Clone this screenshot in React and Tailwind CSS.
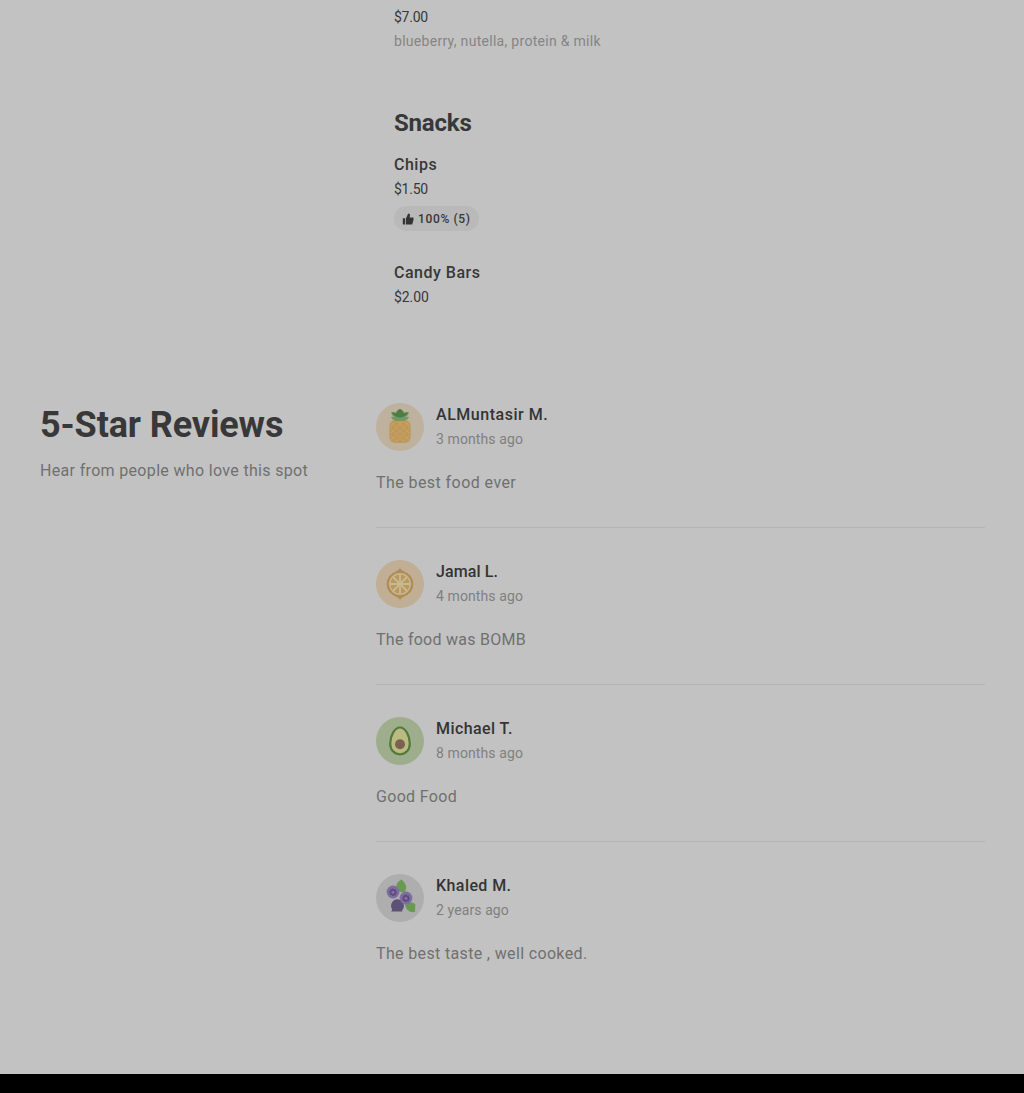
const PineappleAvatar = () => (
  <svg className="w-12 h-12 shrink-0" viewBox="0 0 48 48">
    <circle cx="24" cy="24" r="24" fill="#beb19e" />
    <rect x="13.3" y="17" width="21.4" height="23" rx="6" fill="#bf9857" />
    <g stroke="#c3a36b" strokeWidth="1" fill="none">
      <path d="M14 24l6-6M14 31l13-13M14 38l20-20M20 39l14-14M27 39l7-7" />
      <path d="M34 24l-6-6M34 31L21 18M34 38L14 18M28 39L14 25M21 39l-7-7" />
    </g>
    <path d="M24 17.500c-3.500 1.500-7.500 0-9-3.500 1.800-.6 3-.3 4 .3-2.600-1.200-3.800-3-3.800-5.200 1.800-.3 3.200.1 4.200 1C20.300 8 22 6.800 24 6c2 .8 3.700 2 4.600 4.100 1-.9 2.400-1.300 4.200-1 0 2.200-1.200 4-3.800 5.200 1-.6 2.200-.9 4-.3-1.500 3.500-5.500 5-9 3.500z" fill="#719a61" />
    <path d="M24 14.500c-3.800-.2-7-1.900-8-4.900 2-.3 3.300 0 4.300.9.3-2 1.500-3.500 3.700-4.500 2.200 1 3.400 2.500 3.700 4.500 1-.9 2.300-1.200 4.300-.9-1 3-4.200 4.700-8 4.900z" fill="#4f7b47" />
  </svg>
);

const OrangeAvatar = () => (
  <svg className="w-12 h-12 shrink-0" viewBox="0 0 48 48">
    <circle cx="24" cy="24" r="24" fill="#c0ae95" />
    <path d="M24 8.500l4 3a13 13 0 010 25L24 39.500l-4-3a13 13 0 010-25z" fill="#b18c54" />
    <circle cx="24" cy="24" r="11" fill="#c6b692" />
    <circle cx="24" cy="24" r="9.600" fill="#ba985f" />
    <g stroke="#c9b991" strokeWidth="1.800">
      <path d="M24 14v20M14 24h20M17 17l14 14M31 17L17 31" />
    </g>
  </svg>
);

const AvocadoAvatar = () => (
  <svg className="w-12 h-12 shrink-0" viewBox="0 0 48 48">
    <circle cx="24" cy="24" r="24" fill="#9eae8c" />
    <path d="M24 10.500c-5.500 0-9.800 8.300-9.800 16.200 0 6.300 4.200 10.600 9.800 10.600s9.800-4.300 9.800-10.600c0-7.900-4.300-16.200-9.800-16.200z" fill="#bcba83" stroke="#507b3a" strokeWidth="2.200" />
    <circle cx="24" cy="27.300" r="5" fill="#7a6150" />
  </svg>
);

const BlueberryAvatar = () => (
  <svg className="w-12 h-12 shrink-0" viewBox="0 0 48 48">
    <circle cx="24" cy="24" r="24" fill="#aeaeae" />
    <path d="M21 15c-2-4 .8-7.500 4.500-9.500 4.300 4 6.300 8.500 3 12.500-3 .6-6-.2-7.500-3z" fill="#6a9951" />
    <path d="M29 30c3.500-2.800 8-2 10.300.5L39 38c-5 .8-9.500-1.800-10-8z" fill="#6a9951" />
    <circle cx="17" cy="18" r="6.400" fill="#7f6da2" />
    <path d="M17 14.300l1.200 1.200 1.800 0v1.800l1.200 1.200-1.300 1.200-.2 1.700-1.700-.1-1.300 1-1.100-1.200-1.700-.2.100-1.700-.9-1.300 1.200-1.100.1-1.600 1.700.1z" fill="#5b4a7d" />
    <circle cx="17" cy="18.300" r="1.600" fill="#8273a3" />
    <path d="M21.600 25.200a6.500 6.500 0 016.400 6.500c0 1.800-.8 3.600-2 4.700l.5 1.100H15.300l.9-2.200a6.500 6.500 0 015.400-10.100z" fill="#5d5276" />
    <circle cx="30" cy="24" r="6.400" fill="#7f6da2" />
    <path d="M30 20.300l1.200 1.200 1.800 0v1.800l1.200 1.200-1.300 1.200-.2 1.700-1.700-.1-1.300 1-1.100-1.200-1.700-.2.100-1.700-.9-1.300 1.200-1.100.1-1.600 1.700.1z" fill="#5b4a7d" />
    <circle cx="30" cy="24.300" r="1.600" fill="#8273a3" />
  </svg>
);

const reviews = [
  { name: "ALMuntasir M.", nameSpacing: "tracking-[0.52px]", date: "3 months ago", text: "The best food ever", textSpacing: "tracking-[0.43px]", Avatar: PineappleAvatar },
  { name: "Jamal L.", nameSpacing: "tracking-[0.1px]", date: "4 months ago", text: "The food was BOMB", textSpacing: "tracking-[0.27px]", Avatar: OrangeAvatar },
  { name: "Michael T.", nameSpacing: "tracking-[0.42px]", date: "8 months ago", text: "Good Food", textSpacing: "tracking-[0.32px]", Avatar: AvocadoAvatar },
  { name: "Khaled M.", nameSpacing: "tracking-[0.42px]", date: "2 years ago", text: "The best taste , well cooked.", textSpacing: "tracking-[0.35px]", Avatar: BlueberryAvatar },
];

function Review({ review, last }) {
  const { name, nameSpacing, date, text, textSpacing, Avatar } = review;
  return (
    <article className={last ? "h-[125px]" : "h-[125px] mb-8 border-b border-[#b4b4b4]"}>
      <div className="flex gap-3">
        <Avatar />
        <div>
          <h3 className={`w-fit text-base leading-6 font-medium text-[#343434] ${nameSpacing}`}>{name}</h3>
          <p className="w-fit mt-0.5 text-sm leading-5 text-[#808080] tracking-[0.1px]">{date}</p>
        </div>
      </div>
      <p className={`w-fit mt-5 text-base leading-6 text-[#707070] ${textSpacing}`}>{text}</p>
    </article>
  );
}

export default function App() {
  return (
    <div className="h-[1093px] flex flex-col overflow-hidden bg-[#c2c2c2] font-['Roboto',sans-serif] text-[#383838] whitespace-nowrap">
      {/* Menu */}
      <section className="h-[403px] shrink-0 pl-[394px] pt-[7px]">
        <p className="w-fit text-sm leading-5 tracking-[-0.25px]">$7.00</p>
        <p className="w-fit mt-1 text-sm leading-5 text-[#858585] tracking-[0.29px]">blueberry, nutella, protein &amp; milk</p>

        <h2 className="w-fit mt-14 text-2xl leading-8 font-bold tracking-[-0.2px]">Snacks</h2>
        <h3 className="w-fit mt-3.5 text-base leading-6 font-medium tracking-[0.5px]">Chips</h3>
        <p className="w-fit mt-0.5 text-sm leading-5 tracking-[-0.25px]">$1.50</p>
        <div className="mt-[7px] w-[85px] h-[25px] flex items-center gap-1 pl-[8px] rounded-full bg-[#b9b9b9]">
          <svg className="w-3 h-3 shrink-0" viewBox="0 0 12 12" fill="#343434">
            <path d="M.8 5.300h2.400v6.200H.8zM4 5.300L6.200.4c1.300 0 2 .8 1.800 2L7.600 4.400h3.900v2.500l-1.300 4.600H4z" />
          </svg>
          <span className="text-xs leading-4 font-medium tracking-[0.65px]">100% (5)</span>
        </div>

        <h3 className="w-fit mt-[30px] text-base leading-6 font-medium tracking-[0.5px]">Candy Bars</h3>
        <p className="w-fit mt-0.5 text-sm leading-5 tracking-[-0.1px]">$2.00</p>
      </section>

      {/* Reviews */}
      <main className="flex-1 flex pl-10">
        <div className="w-[336px] shrink-0">
          <h1 className="w-fit text-4xl leading-[44px] font-bold tracking-[-0.12px]">5-Star Reviews</h1>
          <p className="w-fit mt-3 text-base leading-6 text-[#707070] tracking-[0.33px]">Hear from people who love this spot</p>
        </div>
        <div className="w-[609px]">
          {reviews.map((review, i) => (
            <Review key={review.name} review={review} last={i === reviews.length - 1} />
          ))}
        </div>
      </main>

      <footer className="h-[19px] shrink-0 bg-black" />
    </div>
  );
}
